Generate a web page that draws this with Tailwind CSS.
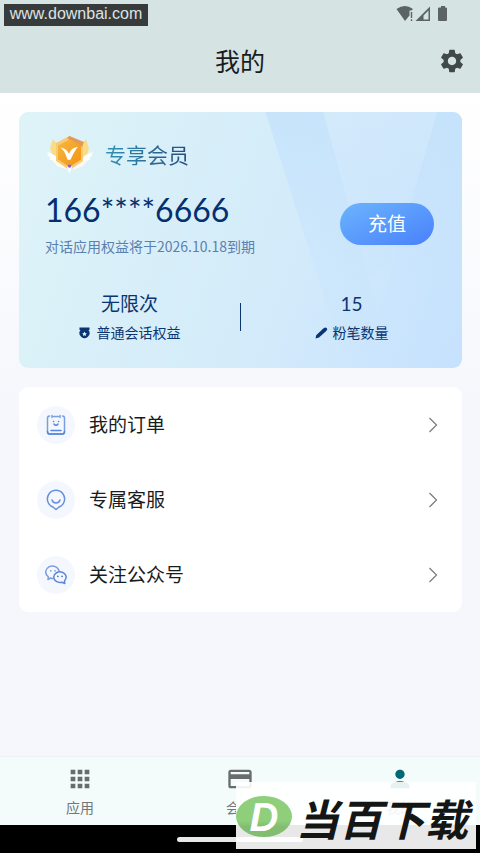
<!DOCTYPE html>
<html lang="zh-CN">
<head>
  <meta charset="UTF-8" />
  <meta name="viewport" content="width=device-width, initial-scale=1.0" />
  <title>我的</title>
  <script src="https://cdn.jsdelivr.net/npm/@tailwindcss/browser@4"></script>
</head>
<body class="relative min-h-screen flex flex-col bg-linear-to-b from-white from-10% to-[#f5f7fc] to-50% text-[#191c1d] font-['Lato','Noto_Sans_CJK_SC',sans-serif]">
  <!-- Header -->
  <header class="bg-[#d6e3e3]">
    <div class="h-[30px] pt-1 pr-8 flex justify-end items-start">
      <svg class="w-[52px] h-5" viewBox="0 0 52 20" fill="#5b6363">
        <path d="M.500 5 Q9 -1 17 5 L15.500 6.500 H13.500 V11.500 L9 17 Z" />
        <path d="M14.800 8 h1.400 v6 h-1.400z M14.800 15.300 h1.400 v1.700 h-1.400z" />
        <path d="M19.500 17 L34 2.500 V17 Z M27.500 11.500 V15.500 H32.500 V6.500 Z" fill-rule="evenodd" />
        <path d="M43 3.500 h2 V2 h4 v1.500 h1 q1 0 1 1 V16 q0 1 -1 1 h-7 q-1 0 -1 -1 V4.500 q0 -1 1 -1z" />
      </svg>
    </div>
    <div class="h-[63px] pb-0.5 px-3.5 grid grid-cols-[28px_1fr_28px] items-center">
      <h1 class="col-start-2 text-center text-[25px] leading-8">我的</h1>
      <button aria-label="设置">
        <svg class="w-7 h-7" viewBox="0 0 24 24" fill="#3f484a">
          <path d="M19.140 12.940c.04-.3.060-.61.060-.94 0-.32-.02-.64-.07-.94l2.030-1.580c.18-.14.23-.41.12-.61l-1.920-3.320c-.12-.22-.37-.29-.59-.22l-2.390.96c-.5-.38-1.030-.7-1.620-.94l-.36-2.540c-.04-.24-.24-.41-.48-.41h-3.840c-.24 0-.43.17-.47.41l-.36 2.540c-.59.24-1.130.57-1.620.94l-2.390-.96c-.22-.08-.47 0-.59.22L2.740 8.870c-.12.21-.08.47.12.61l2.030 1.580c-.05.3-.09.63-.09.94s.02.64.07.94l-2.030 1.580c-.18.14-.23.41-.12.61l1.920 3.320c.12.22.37.29.59.22l2.390-.96c.5.38 1.030.7 1.620.94l.36 2.540c.05.24.24.41.48.41h3.840c.24 0 .44-.17.47-.41l.36-2.540c.59-.24 1.130-.56 1.620-.94l2.390.96c.22.08.47 0 .59-.22l1.920-3.320c.12-.22.070-.47-.12-.61l-2.010-1.580zM12 15.600c-1.980 0-3.600-1.620-3.600-3.600s1.620-3.600 3.600-3.600 3.600 1.620 3.600 3.600-1.620 3.600-3.600 3.600z" />
        </svg>
      </button>
    </div>
  </header>

  <main class="flex-1 pl-[19px] pr-[18px] pt-[19px] pb-5">
    <!-- Membership card -->
    <section class="relative overflow-hidden rounded-[9px] bg-linear-[110deg] from-[#def4f8] via-[#d3ebfa] via-60% to-[#c6e1fe] pt-5 pb-6 text-[#0b3570]">
      <svg class="absolute inset-0 w-full h-full" viewBox="0 0 444 256" preserveAspectRatio="none">
        <defs>
          <linearGradient id="ray" x1="0" y1="0" x2="0" y2="1">
            <stop offset="0" stop-color="#c4e2fc" stop-opacity=".8" />
            <stop offset=".85" stop-color="#c8e4fd" stop-opacity=".25" />
            <stop offset="1" stop-color="#c8e4fd" stop-opacity="0" />
          </linearGradient>
          <linearGradient id="beam" x1="0" y1="0" x2="0" y2="1">
            <stop offset="0" stop-color="#d2e9fb" stop-opacity=".7" />
            <stop offset="1" stop-color="#c9e4fd" stop-opacity=".4" />
          </linearGradient>
        </defs>
        <path d="M247 0 H305 L375 256 H328 Z" fill="url(#ray)" />
        <path d="M305 0 H419 L375 150 L350 165 Z" fill="url(#beam)" />
        <path d="M419 0 H444 V256 H345 Z" fill="url(#ray)" />
      </svg>

      <div class="relative">
        <div class="h-[46px] pl-[26px] flex items-center gap-2.5">
          <svg class="w-[50px] h-[42px]" viewBox="0 0 50 42">
            <defs>
              <linearGradient id="gold" x1="0" y1="0" x2="1" y2="1">
                <stop offset="0" stop-color="#f7b83f" />
                <stop offset="1" stop-color="#f19314" />
              </linearGradient>
            </defs>
            <path d="M8 5 L5 14 L9 25 L20 34 L14 12 Z M41 5 L44 14 L41 25 L30 34 L36 12 Z" fill="#fbdc84" />
            <path d="M1 17 L11 22 L14 29 L4 25 L6 24 L2 21 L4 20 Z M49 17 L39 22 L36 29 L46 25 L44 24 L48 21 L46 20 Z" fill="#fff" />
            <path d="M7 26 L16 29 L23 36 L12 32 Z M43 26 L34 29 L27 36 L38 32 Z" fill="#fffaf0" />
            <path d="M24.500 2 L38 9 V27 L24.500 36 L11 27 V9 Z" fill="#f8ca74" />
            <path d="M24.500 2 L39 8 L37 13 L24.500 6 L22 4 Z" fill="#e39a58" />
            <path d="M24.500 5.500 L36 11.500 V25.500 L24.500 33 L13 25.500 V11.500 Z" fill="url(#gold)" />
            <path d="M18 15 Q22 16 24 22 Q26 15 31 14 Q28 18 25 25 H23 Q21 18 18 15 Z" fill="#fff" stroke="#fff" stroke-width="1.500" />
            <path d="M24.500 30 L27 33 L24.500 40 L22 33 Z" fill="#fff" />
            <circle cx="24.500" cy="32" r="1.800" fill="#8d62c8" />
          </svg>
          <h2 class="text-[21px] leading-7 bg-linear-to-r from-[#3193b5] to-[#264a7c] bg-clip-text text-transparent">专享会员</h2>
        </div>

        <div class="mt-3 pl-[26px] pr-7 flex items-center justify-between">
          <div>
            <p class="text-[32px] leading-10 text-[#05306f]">166****6666</p>
            <p class="mt-1 text-[14px] leading-6 text-[#5b80b0] font-['Noto_Sans_CJK_SC',sans-serif]">对话应用权益将于2026.10.18到期</p>
          </div>
          <button class="w-[94px] h-[42px] rounded-full bg-linear-to-br from-[#6cb4fe] to-[#4a80fa] text-white text-[19px]">充值</button>
        </div>

        <div class="mt-8 flex items-center">
          <div class="flex-1 text-center">
            <p class="text-[19px] leading-7">无限次</p>
            <p class="mt-1 flex items-center justify-center gap-[7px] text-[14px] leading-[22px]">
              <svg class="w-[11px] h-3" viewBox="0 0 11 12" fill="#0b3570">
                <path d="M.500 .500 H10.500 V3 H9.500 A5 5 0 1 1 1.500 3 H.500 Z M5.500 4.500 L4.800 6 L3.200 6.200 L4.300 7.400 L4 9 L5.500 8.200 L7 9 L6.700 7.400 L7.800 6.200 L6.200 6 Z" fill-rule="evenodd" />
              </svg>
              普通会话权益
            </p>
          </div>
          <div class="w-px h-7 bg-[#0b3570]"></div>
          <div class="flex-1 text-center">
            <p class="text-[19px] leading-7">15</p>
            <p class="mt-1 flex items-center justify-center gap-[5px] text-[14px] leading-[22px]">
              <svg class="w-[13px] h-3" viewBox="0 0 13 12" fill="#0b3570">
                <path d="M.500 11.500 L1.200 8.200 L8 1.800 L9.500 .700 Q10.500 0 11.500 .900 Q12.800 2 12 3 L10.700 4.500 L4 10.500 Z" />
              </svg>
              粉笔数量
            </p>
          </div>
        </div>
      </div>
    </section>

    <!-- Menu -->
    <nav class="mt-[19px] rounded-[9px] bg-white">
      <a href="#orders" class="h-[75px] pl-[18px] pr-6 flex items-center gap-3.5">
        <span class="w-[38px] h-[38px] rounded-full bg-[#f4f8fe] flex items-center justify-center">
          <svg class="w-[22px] h-[22px]" viewBox="0 0 22 22" fill="none" stroke="#5484dd" stroke-width="1.500" stroke-linecap="round">
            <path d="M4.500 2 Q2.500 2 2.500 4.500 V17.500 Q2.500 20 4.500 20 H17.500 Q19.500 20 19.500 17.500 V4.500 Q19.500 2 17.500 2 M8.500 2.500 H13.500 M7 1.500 V3.500 M15 1.500 V3.500" stroke="#789edf" />
            <path d="M2.500 17.500 Q2.500 20 4.500 20 H17.500 Q19.500 20 19.500 17.500 M6 16.500 H16" />
            <path d="M9 10 Q11 12.500 13 10" />
            <path d="M8.500 7.500 h.1 M13.500 7.500 h.1" stroke-width="1.600" />
          </svg>
        </span>
        <span class="flex-1 text-[19px] leading-7">我的订单</span>
        <svg class="w-2.5 h-4" viewBox="0 0 10 16" fill="none" stroke="#77797e" stroke-width="1.200"><path d="M1.500 1 L8.500 8 L1.500 15" /></svg>
      </a>
      <a href="#service" class="h-[75px] pl-[18px] pr-6 flex items-center gap-3.5">
        <span class="w-[38px] h-[38px] rounded-full bg-[#f4f8fe] flex items-center justify-center">
          <svg class="w-[22px] h-[22px]" viewBox="0 0 22 22" fill="none" stroke="#668fdd" stroke-width="1.500" stroke-linecap="round" stroke-linejoin="round">
            <path d="M11 20.500 L8 18 A8.600 8.600 0 1 1 14 18 Z" />
            <path d="M7 11 Q8 14 11 14 Q14 14 15 11" />
          </svg>
        </span>
        <span class="flex-1 text-[19px] leading-7">专属客服</span>
        <svg class="w-2.5 h-4" viewBox="0 0 10 16" fill="none" stroke="#77797e" stroke-width="1.200"><path d="M1.500 1 L8.500 8 L1.500 15" /></svg>
      </a>
      <a href="#follow" class="h-[75px] pl-[18px] pr-6 flex items-center gap-3.5">
        <span class="w-[38px] h-[38px] rounded-full bg-[#f4f8fe] flex items-center justify-center">
          <svg class="w-[22px] h-[22px]" viewBox="0 0 22 22" fill="none" stroke="#7d9fdf" stroke-width="1.500" stroke-linecap="round" stroke-linejoin="round">
            <path d="M8 14.500 Q6.500 14.600 5.500 14 L3 15.500 L3.300 12.800 A6.700 6 0 1 1 14 7" />
            <path d="M5.800 6.800 h.1 M10 6.800 h.1" stroke-width="1.700" />
            <path d="M19.500 16.800 A6.200 5.300 0 1 0 17 18.200 L19.800 19.500 Z" stroke="#5c86d8" />
            <path d="M12.800 12.300 h.1 M17 12.300 h.1" stroke="#4b74cd" stroke-width="1.700" />
          </svg>
        </span>
        <span class="flex-1 text-[19px] leading-7">关注公众号</span>
        <svg class="w-2.5 h-4" viewBox="0 0 10 16" fill="none" stroke="#77797e" stroke-width="1.200"><path d="M1.500 1 L8.500 8 L1.500 15" /></svg>
      </a>
    </nav>
  </main>

  <!-- Bottom tabs -->
  <footer>
    <nav class="grid grid-cols-3 border-t border-[#edf1f3] bg-[#f4fbfb] pt-2 pb-1.5 text-[14px] leading-[22px] text-[#737778]">
      <a href="#apps" class="flex flex-col items-center gap-1">
        <svg class="w-7 h-7" viewBox="0 0 24 24" fill="#686c6d"><path d="M4 8h4V4H4v4zm6 12h4v-4h-4v4zm-6 0h4v-4H4v4zm0-6h4v-4H4v4zm6 0h4v-4h-4v4zm6-10v4h4V4h-4zm-6 4h4V4h-4v4zm6 6h4v-4h-4v4zm0 6h4v-4h-4v4z" /></svg>
        应用
      </a>
      <a href="#vip" class="flex flex-col items-center gap-1">
        <svg class="w-7 h-7" viewBox="0 0 24 24" fill="#686c6d"><path d="M20 4H4c-1.110 0-1.990.89-1.990 2L2 18c0 1.110.89 2 2 2h16c1.110 0 2-.89 2-2V6c0-1.110-.89-2-2-2zm0 14H4v-6h16v6zm0-10H4V6h16v2z" /></svg>
        会员
      </a>
      <a href="#me" class="flex flex-col items-center gap-1">
        <svg class="w-7 h-7" viewBox="0 0 24 24" fill="#006874"><path d="M12 12c2.210 0 4-1.790 4-4s-1.790-4-4-4-4 1.790-4 4 1.790 4 4 4zm0 2c-2.670 0-8 1.340-8 4v2h16v-2c0-2.660-5.330-4-8-4z" /></svg>
        我的
      </a>
    </nav>
    <div class="h-7 bg-black flex items-center justify-center">
      <div class="w-[126px] h-[5px] rounded-full bg-[#e8e8e8]"></div>
    </div>
  </footer>

  <!-- Site watermarks -->
  <div class="absolute left-1 top-1 w-36 h-[22px] bg-[#373b3c] text-center text-[16px] leading-[19px] text-[#dfe3e3] font-['Liberation_Sans',sans-serif]">www.downbai.com</div>
  <div class="absolute right-1 bottom-1 w-60 h-[67px] pt-0.5 bg-white/91 flex items-center gap-1">
    <div class="w-14 h-[41px] rounded-[50%] bg-linear-to-b from-[#8fcf7c] from-60% to-[#82bd70] to-75% flex items-center justify-center text-[40px] leading-10 font-bold italic text-white font-['Liberation_Sans',sans-serif]">D</div>
    <div class="text-[43px] leading-[52px] font-bold italic text-[#141616] whitespace-nowrap font-['Noto_Sans_CJK_SC',sans-serif]">当百下载</div>
  </div>
</body>
</html>
